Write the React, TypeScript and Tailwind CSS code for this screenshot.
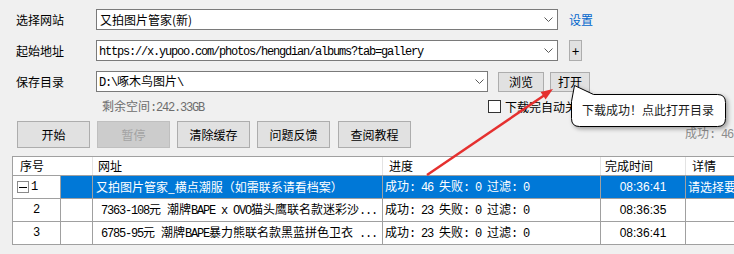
import React from 'react';

// split text into ascii runs (monospace, SimSun-like) and CJK runs
function Mx({ t, className = '' }: { t: string; className?: string }) {
  const parts = t.split(/([\x20-\x7e]+)/).filter(Boolean);
  return (
    <span className={className}>
      {parts.map((s, i) =>
        /^[\x20-\x7e]+$/.test(s) ? (
          <span key={i} className="font-['Liberation_Mono',monospace] text-[12px] tracking-[-1.2px] whitespace-pre">
            {s}
          </span>
        ) : (
          <span key={i}>{s}</span>
        )
      )}
    </span>
  );
}

function Chevron() {
  return (
    <svg width="9" height="5" viewBox="0 0 9 5" className="shrink-0">
      <path d="M0.5 0.5 L4.5 4.5 L8.5 0.5" fill="none" stroke="#5a5a5a" strokeWidth="1" />
    </svg>
  );
}

function Btn({ label, disabled = false }: { label: string; disabled?: boolean }) {
  return (
    <div
      className={
        disabled
          ? 'shrink-0 w-[73px] h-[27px] flex items-center justify-center border border-[#bfbfbf] bg-[#cccccc] text-[#a3a3a3] leading-none'
          : 'shrink-0 w-[73px] h-[27px] flex items-center justify-center border border-[#adadad] bg-[#e1e1e1] text-black leading-none'
      }
    >
      {label}
    </div>
  );
}

const rows = [
  { n: '2', url: '7363-108元 潮牌BAPE x OVO猫头鹰联名款迷彩沙...', ok: '23', time: '08:36:35' },
  { n: '3', url: '6785-95元 潮牌BAPE暴力熊联名款黑蓝拼色卫衣 ...', ok: '23', time: '08:36:41' },
];

export default function App() {
  return (
    <div className="relative w-[734px] h-[254px] overflow-hidden bg-[#f0f0f0] text-[12px] text-black font-['Noto_Sans_CJK_SC',sans-serif] pt-[9px]">
      {/* site */}
      <div className="flex items-center h-[21px]">
        <div className="w-[96px] shrink-0 pl-[16px] leading-none">选择网站</div>
        <div className="w-[462px] shrink-0 h-[21px] flex items-center justify-between border border-[#7a7a7a] bg-white pl-[3px] pr-[4px] leading-none">
          <span>又拍图片管家(新)</span>
          <Chevron />
        </div>
        <span className="ml-[11px] text-[#0066cc] leading-none">设置</span>
      </div>

      {/* start url */}
      <div className="flex items-center h-[21px] mt-[10px]">
        <div className="w-[96px] shrink-0 pl-[16px] leading-none">起始地址</div>
        <div className="w-[462px] shrink-0 h-[21px] flex items-center justify-between border border-[#7a7a7a] bg-white pl-[2px] pr-[4px] leading-none">
          <Mx t="https://x.yupoo.com/photos/hengdian/albums?tab=gallery" />
          <Chevron />
        </div>
        <div className="ml-[11px] w-[13px] h-[21px] flex items-center justify-center border border-[#adadad] bg-[#e1e1e1] leading-none text-[13px]">+</div>
      </div>

      {/* save dir */}
      <div className="flex items-center h-[21px] mt-[10px]">
        <div className="w-[96px] shrink-0 pl-[16px] leading-none">保存目录</div>
        <div className="w-[392px] shrink-0 h-[21px] flex items-center justify-between border border-[#7a7a7a] bg-white pl-[2px] pr-[3px] leading-none">
          <Mx t="D:\啄木鸟图片\" />
          <Chevron />
        </div>
        <div className="ml-[10px] w-[46px] h-[20px] flex items-center justify-center border border-[#adadad] bg-[#e1e1e1] leading-none">浏览</div>
        <div className="ml-[6px] w-[40px] h-[20px] flex items-center justify-center border border-[#adadad] bg-[#e1e1e1] leading-none">打开</div>
      </div>

      {/* free space + checkbox */}
      <div className="flex items-center h-[29px]">
        <div className="w-[488px] shrink-0 pl-[102px] text-[#6d6d6d] leading-none">
          <Mx t="剩余空间:242.33GB" />
        </div>
        <div className="flex items-center gap-[4px] leading-none whitespace-nowrap">
          <div className="w-[13px] h-[13px] border border-[#333333] bg-white" />
          <span>下载完自动关闭</span>
        </div>
      </div>

      {/* buttons */}
      <div className="flex items-start h-[27px] pl-[17px] gap-[7px]">
        <Btn label="开始" />
        <Btn label="暂停" disabled />
        <Btn label="清除缓存" />
        <Btn label="问题反馈" />
        <div className="ml-[1px] shrink-0">
          <Btn label="查阅教程" />
        </div>
        <div className="ml-[267px] mt-[6px] shrink-0 text-[#8c8c8c] leading-none whitespace-nowrap">
          <Mx t="成功: 46" />
        </div>
      </div>

      {/* table */}
      <div className="ml-[12px] mt-[8px] w-[740px] border-l border-t border-[#a0a0a0] bg-white leading-none">
        <div className="flex h-[19px] border-b border-[#a0a0a0]">
          <div className="w-[80px] pl-[7px] flex items-center border-r border-[#e3e3e3]">序号</div>
          <div className="w-[290px] pl-[5px] flex items-center border-r border-[#e3e3e3]">网址</div>
          <div className="w-[218px] pl-[6px] flex items-center border-r border-[#e3e3e3]">进度</div>
          <div className="w-[85px] pl-[4px] flex items-center border-r border-[#e3e3e3]">完成时间</div>
          <div className="flex-1 pl-[6px] flex items-center">详情</div>
        </div>

        <div className="flex h-[23px] border-b border-[#a0a0a0]">
          <div className="w-[48px] pl-[4px] flex items-center gap-[2px] border-r border-[#a0a0a0]">
            <div className="w-[12px] h-[12px] border border-[#8a8a8a] flex items-center justify-center">
              <div className="w-[8px] h-[1px] bg-black" />
            </div>
            <span className="font-['Liberation_Mono',monospace] text-[12px]">1</span>
          </div>
          <div className="w-[32px] bg-[#0078d7] border-r border-[#a0a0a0]" />
          <div className="w-[290px] pl-[3px] flex items-center bg-[#0078d7] text-white border-r border-[#a0a0a0] whitespace-nowrap overflow-hidden">
            又拍图片管家_横点潮服（如需联系请看档案）
          </div>
          <div className="w-[218px] pl-[2px] flex items-center bg-[#0078d7] text-white border-r border-[#a0a0a0] whitespace-nowrap">
            <Mx t="成功: 46 失败: 0 过滤: 0" />
          </div>
          <div className="w-[85px] flex items-center justify-center bg-[#0078d7] text-white border-r border-[#a0a0a0] font-['Liberation_Sans',sans-serif]">
            08:36:41
          </div>
          <div className="flex-1 pl-[2px] flex items-center bg-[#0078d7] text-white whitespace-nowrap overflow-hidden">
            请选择要下载的图片
          </div>
        </div>

        {rows.map((r) => (
          <div key={r.n} className="flex h-[23px] border-b border-[#a0a0a0]">
            <div className="w-[48px] flex items-center justify-center border-r border-[#a0a0a0] font-['Liberation_Mono',monospace] text-[12px]">
              {r.n}
            </div>
            <div className="w-[32px] border-r border-[#a0a0a0]" />
            <div className="w-[290px] pl-[8px] flex items-center border-r border-[#a0a0a0] whitespace-nowrap overflow-hidden">
              <Mx t={r.url} />
            </div>
            <div className="w-[218px] pl-[2px] flex items-center border-r border-[#a0a0a0] whitespace-nowrap">
              <Mx t={`成功: ${r.ok} 失败: 0 过滤: 0`} />
            </div>
            <div className="w-[85px] flex items-center justify-center border-r border-[#a0a0a0] font-['Liberation_Sans',sans-serif]">
              {r.time}
            </div>
            <div className="flex-1" />
          </div>
        ))}
      </div>

      {/* red pointer arrow */}
      <svg className="absolute left-0 top-0 pointer-events-none" width="734" height="254">
        <line x1="427" y1="175" x2="544" y2="95.5" stroke="#e5302f" strokeWidth="2.5" />
        <polygon points="553,89 545.6,99.5 540.6,92.1" fill="#e5302f" />
      </svg>

      {/* balloon tooltip */}
      <div className="absolute left-[566px] top-[82px] w-[166px] h-[50px]">
        <svg width="166" height="50" className="absolute left-0 top-0 drop-shadow-[2px_2px_2px_rgba(0,0,0,0.35)]">
          <path
            d="M8.5 3.5 L27.5 12.5 H151.5 Q159.5 12.5 159.5 20.5 V36.5 Q159.5 44.5 151.5 44.5 H13.5 Q5.5 44.5 5.5 36.5 V19.5 Z"
            fill="#ffffff"
            stroke="#000000"
            strokeWidth="1"
          />
        </svg>
        <div className="absolute left-[16px] top-[22px] leading-none text-[#1a1a1a] whitespace-nowrap">
          下载成功！点此打开目录
        </div>
      </div>
    </div>
  );
}
